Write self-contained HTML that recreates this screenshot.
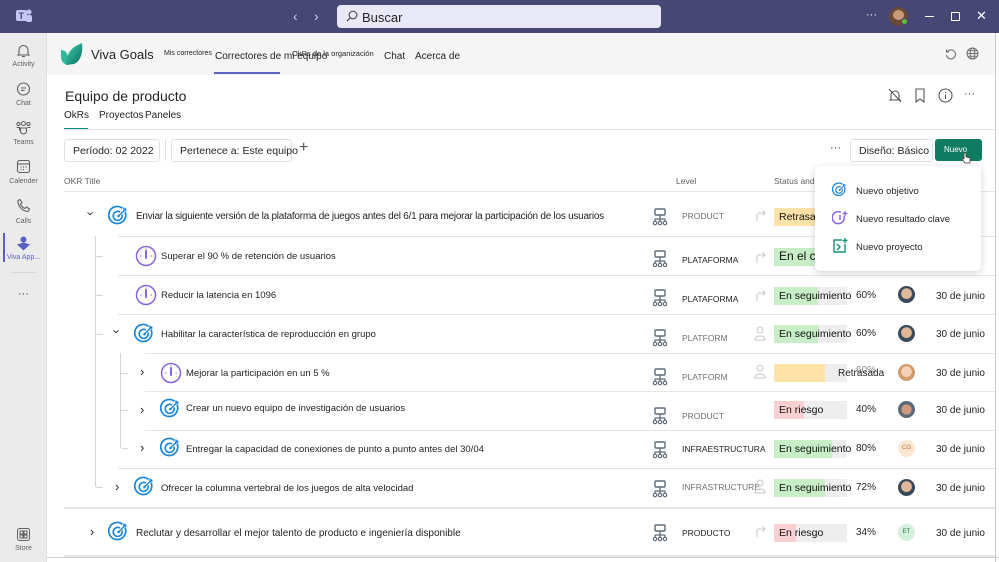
<!DOCTYPE html>
<html><head><meta charset="utf-8">
<style>
*{box-sizing:border-box;margin:0;padding:0}
body{width:999px;height:562px;overflow:hidden;background:#fff;font-family:"Liberation Sans",sans-serif;color:#242424;position:relative}
.a{position:absolute}
.top{left:0;top:0;width:999px;height:33px;background:#464775}
.rail{left:0;top:33px;width:47px;height:529px;background:#ebebeb}
.ri{position:absolute;left:0;width:47px;text-align:center;font-size:7px;color:#616161}
.hdr{left:47px;top:33px;width:948px;height:42px;background:#f5f5f5}
.t{position:absolute;white-space:nowrap;font-size:10px}
.sep{position:absolute;height:1px;background:#e6e6e6}
.bar{position:absolute;left:774px;width:73px;height:18px;background:#eeeeee}
.bar i{position:absolute;left:0;top:0;height:18px}
.bar span{position:absolute;left:5px;top:3px;font-size:10.5px;white-space:nowrap;color:#111}
.av{position:absolute;left:898px;width:17px;height:17px;border-radius:50%}
.btn{position:absolute;border:1px solid #e0e0e0;border-radius:3px;background:#fff;font-size:10.5px;padding:0 8px;height:23px;line-height:23px;white-space:nowrap}
</style></head><body>
<div class="a top"></div>
<svg class="a" style="left:15px;top:8px" width="18" height="16"><rect x="1" y="2" width="11" height="11" rx="2" fill="#c5c7f0"/><text x="3.5" y="11" font-size="9" font-weight="bold" fill="#464775" font-family="Liberation Sans">T</text><circle cx="14" cy="4" r="2.5" fill="#c5c7f0"/><rect x="11" y="7" width="6" height="7" rx="2" fill="#c5c7f0"/></svg>
<div class="t" style="left:293px;top:8px;color:#d0d0ee;font-size:14px">‹</div>
<div class="t" style="left:314px;top:8px;color:#d0d0ee;font-size:14px">›</div>
<div class="a" style="left:337px;top:5px;width:324px;height:23px;background:#e8e8f6;border-radius:4px"></div>
<svg class="a" style="left:346px;top:10px" width="12" height="12"><circle cx="7" cy="5" r="3.8" fill="none" stroke="#555" stroke-width="1.2"/><path d="M4.5 7.5L1 11" stroke="#555" stroke-width="1.3"/></svg>
<div class="t" style="left:362px;top:10px;font-size:13px;color:#242424">Buscar</div>
<div class="t" style="left:866px;top:9px;color:#fff;font-size:11px">···</div>
<div class="a" style="left:889px;top:7px;width:19px;height:19px;border-radius:50%;background:#6b4a36"></div>
<div class="a" style="left:893px;top:10px;width:11px;height:10px;border-radius:50%;background:#c99a7a"></div>
<div class="a" style="left:901px;top:18px;width:7px;height:7px;border-radius:50%;background:#5fc12b;border:1px solid #464775"></div>
<div class="a" style="left:925px;top:16px;width:9px;height:1px;background:#fff"></div>
<div class="a" style="left:951px;top:12px;width:9px;height:9px;border:1px solid #fff"></div>
<div class="t" style="left:976px;top:8px;color:#fff;font-size:13px">✕</div>

<div class="a rail"></div>
<div class="a" style="left:46px;top:33px;width:1px;height:529px;background:#e0e0e0"></div>
<svg class="a" style="left:16px;top:43px" width="15" height="15" fill="none" stroke="#616161" stroke-width="1.1"><path d="M3 11V7a4.5 4.5 0 019 0v4l1 1H2z"/><path d="M6 13.5h3"/></svg>
<div class="ri" style="top:61px">Activity</div>
<svg class="a" style="left:16px;top:82px" width="15" height="15" fill="none" stroke="#616161" stroke-width="1.1"><circle cx="7.5" cy="7" r="6"/><path d="M5 6h5M5 8.5h3.5"/></svg>
<div class="ri" style="top:100px">Chat</div>
<svg class="a" style="left:15px;top:120px" width="17" height="15" fill="none" stroke="#616161" stroke-width="1.1"><circle cx="8.5" cy="3.5" r="2"/><circle cx="3.5" cy="4" r="1.6"/><circle cx="13.5" cy="4" r="1.6"/><path d="M5.5 8h6v3a3 3 0 01-6 0z M1.5 7.5h3v3M15.5 7.5h-3"/></svg>
<div class="ri" style="top:139px">Teams</div>
<svg class="a" style="left:16px;top:159px" width="15" height="15" fill="none" stroke="#616161" stroke-width="1.1"><rect x="1.5" y="1.5" width="12" height="12" rx="2"/><path d="M1.5 5h12"/><path d="M4.5 8h1M7 8h1M9.5 8h1M4.5 10.5h1M7 10.5h1" stroke-width="1.3"/></svg>
<div class="ri" style="top:178px">Calender</div>
<svg class="a" style="left:16px;top:198px" width="15" height="15" fill="none" stroke="#616161" stroke-width="1.1"><path d="M4 1.5l2 3-1.5 1.5c.8 2 2.5 3.8 4.5 4.5L10.5 9l3 2-1.5 2.5C6.5 13.5 1.5 8 2 2.5z"/></svg>
<div class="ri" style="top:218px">Calls</div>
<div class="a" style="left:3px;top:233px;width:2px;height:29px;background:#5b5fc7"></div>
<svg class="a" style="left:16px;top:236px" width="15" height="15"><circle cx="7.5" cy="3.5" r="3" fill="#5b5fc7"/><path d="M1 8.5l6.5-2 6.5 2-6.5 6z" fill="#5b5fc7"/></svg>
<div class="ri" style="top:254px;color:#5b5fc7">Viva App...</div>
<div class="a" style="left:11px;top:272px;width:25px;height:1px;background:#d6d6d6"></div>
<div class="ri" style="top:288px;font-size:11px;color:#424242">···</div>
<svg class="a" style="left:17px;top:528px" width="13" height="13" fill="none" stroke="#616161" stroke-width="1"><rect x=".5" y=".5" width="12" height="12" rx="2"/><rect x="3" y="3" width="3" height="3"/><rect x="7" y="3" width="3" height="3"/><rect x="3" y="7" width="3" height="3"/><rect x="7" y="7" width="3" height="3"/></svg>
<div class="ri" style="top:545px">Store</div>
<div class="a" style="left:47px;top:557px;width:952px;height:1px;background:#d0d0d0"></div>
<div class="a" style="left:995px;top:33px;width:1px;height:529px;background:#c8c8c8"></div>

<div class="a hdr"></div>
<svg class="a" style="left:60px;top:42px" width="24" height="24"><defs><linearGradient id="g" x1="0" y1="0" x2="1" y2="1"><stop offset="0" stop-color="#3fd2a8"/><stop offset="1" stop-color="#0b6a66"/></linearGradient></defs><path d="M1 8c4 0 7 3 7 9v6C3 22 1 19 1 14z" fill="#2fb99a"/><path d="M6 23c0-9 4-16 10-19l6-3c1 9-1 18-8 21z" fill="url(#g)"/></svg>
<div class="t" style="left:91px;top:47px;font-size:13px">Viva Goals</div>
<div class="t" style="left:164px;top:50px;font-size:7px">Mis correctores</div>
<div class="t" style="left:215px;top:51px;font-size:10px">Correctores de mi equipo</div>
<div class="a" style="left:214px;top:72px;width:66px;height:2px;background:#5b5fc7"></div>
<div class="t" style="left:292px;top:49px;font-size:7.5px">OkRs de la organización</div>
<div class="t" style="left:384px;top:51px;font-size:10px">Chat</div>
<div class="t" style="left:415px;top:51px;font-size:10px">Acerca de</div>
<svg class="a" style="left:945px;top:48px" width="12" height="12" fill="none" stroke="#707070" stroke-width="1.1"><path d="M2.5 3.5A4.5 4.5 0 1 1 1.5 7"/><path d="M1.5 1.5v2.5h2.5"/></svg>
<svg class="a" style="left:966px;top:47px" width="13" height="13" fill="none" stroke="#707070" stroke-width="1"><circle cx="6.5" cy="6.5" r="5.5"/><ellipse cx="6.5" cy="6.5" rx="2.3" ry="5.5"/><path d="M1 6.5h11M2 3.8h9M2 9.2h9"/></svg>

<div class="t" style="left:65px;top:88px;font-size:14px">Equipo de producto</div>
<svg class="a" style="left:888px;top:88px" width="14" height="15" fill="none" stroke="#555" stroke-width="1.1"><path d="M3 11V7a4 4 0 018 0v4l1 1H2z"/><path d="M1 1l12 13"/></svg>
<svg class="a" style="left:914px;top:88px" width="12" height="15" fill="none" stroke="#555" stroke-width="1.1"><path d="M2 1h8v13l-4-3-4 3z"/></svg>
<svg class="a" style="left:938px;top:88px" width="15" height="15" fill="none" stroke="#555" stroke-width="1.1"><circle cx="7.5" cy="7.5" r="6.5"/><path d="M7.5 6.5v4.5M7.5 4v1"/></svg>
<div class="t" style="left:964px;top:88px;font-size:11px;color:#424242">···</div>
<div class="t" style="left:64px;top:110px">OkRs</div>
<div class="a" style="left:64px;top:128px;width:24px;height:2px;background:#0f8a72"></div>
<div class="t" style="left:99px;top:110px">Proyectos</div>
<div class="t" style="left:145px;top:110px">Paneles</div>
<div class="sep" style="left:64px;top:129px;width:931px"></div>

<div class="btn" style="left:64px;top:139px;width:96px">Período: 02 2022</div>
<div class="a" style="left:165px;top:139px;width:1px;height:22px;background:#e0e0e0"></div>
<div class="btn" style="left:171px;top:139px;width:121px">Pertenece a: Este equipo</div>
<div class="t" style="left:299px;top:139px;font-size:16px;color:#555">+</div>
<div class="t" style="left:830px;top:142px;font-size:11px">···</div>
<div class="btn" style="left:850px;top:139px;width:83px">Diseño: Básico</div>
<div class="a" style="left:935px;top:139px;width:47px;height:22px;background:#0f7b61;border-radius:3px"></div>
<div class="t" style="left:944px;top:145px;font-size:8px;color:#fff">Nuevo</div>
<svg class="a" style="left:961px;top:152px" width="10" height="12"><path d="M3 1v6L1.5 6 1 7l3 4h5V6L5 5V1z" fill="#fff" stroke="#444" stroke-width=".8"/></svg>

<div class="t" style="left:64px;top:176px;font-size:8.5px;color:#616161">OKR Title</div>
<div class="t" style="left:676px;top:176px;font-size:8.5px;color:#616161">Level</div>
<div class="t" style="left:774px;top:176px;font-size:8.5px;color:#616161">Status and</div>
<div class="sep" style="left:64px;top:191px;width:931px"></div>

<div class="sep" style="left:118px;top:236px;width:877px"></div>
<div class="sep" style="left:118px;top:275px;width:877px"></div>
<div class="sep" style="left:118px;top:314px;width:877px"></div>
<div class="sep" style="left:145px;top:353px;width:850px"></div>
<div class="sep" style="left:145px;top:391px;width:850px"></div>
<div class="sep" style="left:145px;top:430px;width:850px"></div>
<div class="sep" style="left:118px;top:468px;width:877px"></div>
<div class="sep" style="left:64px;top:507px;width:931px;height:2px"></div>
<div class="sep" style="left:64px;top:555px;width:931px;height:2px"></div>
<div class="a" style="left:95px;top:236px;width:8px;height:252px;border-left:1px solid #d6d6d6;border-bottom:1px solid #d6d6d6;border-bottom-left-radius:3px"></div>
<div class="a" style="left:95px;top:256px;width:8px;height:1px;background:#d6d6d6"></div>
<div class="a" style="left:95px;top:295px;width:8px;height:1px;background:#d6d6d6"></div>
<div class="a" style="left:95px;top:334px;width:8px;height:1px;background:#d6d6d6"></div>
<div class="a" style="left:120px;top:353px;width:8px;height:96px;border-left:1px solid #d6d6d6;border-bottom:1px solid #d6d6d6;border-bottom-left-radius:3px"></div>
<div class="a" style="left:120px;top:373px;width:8px;height:1px;background:#d6d6d6"></div>
<div class="a" style="left:120px;top:410px;width:8px;height:1px;background:#d6d6d6"></div>

<svg width="0" height="0" style="position:absolute"><defs>
<symbol id="tg" viewBox="0 0 22 22"><path d="M17 6.5A8.5 8.5 0 1 1 14.5 3.3" fill="none" stroke="#1a86d9" stroke-width="1.7"/><path d="M14 9.5A4.5 4.5 0 1 1 12 7" fill="none" stroke="#1a86d9" stroke-width="1.6"/><circle cx="10.5" cy="11" r="1.3" fill="#1a86d9"/><path d="M10.5 11L18 3.5M16 2.5v2.5h2.5" fill="none" stroke="#1a86d9" stroke-width="1.4"/></symbol>
<symbol id="kr" viewBox="0 0 22 22"><circle cx="11" cy="11" r="9.5" fill="none" stroke="#8764e6" stroke-width="1.5"/><path d="M11 6v7" stroke="#8764e6" stroke-width="2" stroke-linecap="round"/><path d="M5 11h1.5M15.5 11H17M11 3.5v1" stroke="#8764e6" stroke-width="1"/></symbol>
<symbol id="lv" viewBox="0 0 16 18"><rect x="3" y="1" width="10" height="6" rx="1" fill="none" stroke="#5f6b7a" stroke-width="1.4"/><path d="M8 7v4M3 11h10M3 11v2M8 11v2M13 11v2" stroke="#5f6b7a" stroke-width="1.3" fill="none"/><circle cx="3" cy="15" r="1.7" fill="none" stroke="#5f6b7a" stroke-width="1.2"/><circle cx="8" cy="15" r="1.7" fill="none" stroke="#5f6b7a" stroke-width="1.2"/><circle cx="13" cy="15" r="1.7" fill="none" stroke="#5f6b7a" stroke-width="1.2"/></symbol>
<symbol id="ar" viewBox="0 0 12 14"><path d="M2 13V7a2 2 0 012-2h6M7.5 2.5L10 5 7.5 7.5" fill="none" stroke="#c8c8c8" stroke-width="1.1"/></symbol>
<symbol id="pp" viewBox="0 0 12 16"><circle cx="6" cy="4" r="3" fill="none" stroke="#c8c8c8" stroke-width="1"/><path d="M1 14c0-3 2-4 5-4s5 1 5 4z" fill="none" stroke="#c8c8c8" stroke-width="1"/></symbol>
</defs></svg>

<!-- row 1 -->
<div class="t" style="left:89px;top:206px;font-size:13px;transform:rotate(90deg)">›</div>
<svg class="a" style="left:108px;top:205px" width="22" height="22"><use href="#tg"/></svg>
<div class="t" style="left:136px;top:211px;font-size:10px;letter-spacing:-0.25px">Enviar la siguiente versión de la plataforma de juegos antes del 6/1 para mejorar la participación de los usuarios</div>
<svg class="a" style="left:652px;top:208px" width="16" height="18"><use href="#lv"/></svg>
<div class="t" style="left:682px;top:211px;font-size:8.5px;color:#707070">PRODUCT</div>
<svg class="a" style="left:755px;top:208px" width="12" height="14"><use href="#ar"/></svg>
<div class="bar" style="top:208px"><i style="width:40px;background:#fde3a8"></i><span>Retrasada</span></div>
<!-- row 2 -->
<svg class="a" style="left:135px;top:245px" width="22" height="22"><use href="#kr"/></svg>
<div class="t" style="left:161px;top:251px;font-size:9.5px">Superar el 90 % de retención de usuarios</div>
<svg class="a" style="left:652px;top:250px" width="16" height="18"><use href="#lv"/></svg>
<div class="t" style="left:682px;top:255px;font-size:8.5px;color:#222">PLATAFORMA</div>
<svg class="a" style="left:755px;top:250px" width="12" height="14"><use href="#ar"/></svg>
<div class="bar" style="top:248px"><i style="width:40px;background:#c7eec7"></i><span style="font-size:12px;top:1px">En el comercio</span></div>
<!-- row 3 -->
<svg class="a" style="left:135px;top:284px" width="22" height="22"><use href="#kr"/></svg>
<div class="t" style="left:161px;top:290px;font-size:9.5px">Reducir la latencia en 1096</div>
<svg class="a" style="left:652px;top:289px" width="16" height="18"><use href="#lv"/></svg>
<div class="t" style="left:682px;top:294px;font-size:8.5px;color:#222">PLATAFORMA</div>
<svg class="a" style="left:755px;top:288px" width="12" height="14"><use href="#ar"/></svg>
<div class="bar" style="top:287px"><i style="width:44px;background:#c7eec7"></i><span>En seguimiento</span></div>
<div class="t" style="left:856px;top:290px">60%</div>
<div class="av" style="top:286px;background:radial-gradient(circle at 50% 45%,#e0b898 40%,#3a4a5a 45%)"></div>
<div class="t" style="left:936px;top:291px">30 de junio</div>
<!-- row 4 -->
<div class="t" style="left:115px;top:324px;font-size:13px;transform:rotate(90deg)">›</div>
<svg class="a" style="left:134px;top:323px" width="22" height="22"><use href="#tg"/></svg>
<div class="t" style="left:161px;top:329px;font-size:9.5px">Habilitar la característica de reproducción en grupo</div>
<svg class="a" style="left:652px;top:329px" width="16" height="18"><use href="#lv"/></svg>
<div class="t" style="left:682px;top:333px;font-size:8.5px;color:#707070">PLATFORM</div>
<svg class="a" style="left:754px;top:326px" width="12" height="16"><use href="#pp"/></svg>
<div class="bar" style="top:325px"><i style="width:44px;background:#c7eec7"></i><span>En seguimiento</span></div>
<div class="t" style="left:856px;top:328px">60%</div>
<div class="av" style="top:325px;background:radial-gradient(circle at 50% 45%,#e0b898 40%,#3a4a5a 45%)"></div>
<div class="t" style="left:936px;top:329px">30 de junio</div>
<!-- row 5 -->
<div class="t" style="left:140px;top:364px;font-size:13px">›</div>
<svg class="a" style="left:160px;top:362px" width="22" height="22"><use href="#kr"/></svg>
<div class="t" style="left:186px;top:368px;font-size:9.5px">Mejorar la participación en un 5 %</div>
<svg class="a" style="left:652px;top:368px" width="16" height="18"><use href="#lv"/></svg>
<div class="t" style="left:682px;top:372px;font-size:8.5px;color:#707070">PLATFORM</div>
<svg class="a" style="left:754px;top:364px" width="12" height="16"><use href="#pp"/></svg>
<div class="bar" style="top:364px"><i style="width:51px;background:#fde3a8"></i></div>
<div class="t" style="left:856px;top:365px;color:#888">60%</div>
<div class="t" style="left:838px;top:368px">Retrasada</div>
<div class="av" style="top:364px;background:radial-gradient(circle at 50% 45%,#f3d2b8 40%,#d09a6a 45%)"></div>
<div class="t" style="left:936px;top:368px">30 de junio</div>
<!-- row 6 -->
<div class="t" style="left:140px;top:402px;font-size:13px">›</div>
<svg class="a" style="left:160px;top:398px" width="22" height="22"><use href="#tg"/></svg>
<div class="t" style="left:186px;top:403px;font-size:9.5px">Crear un nuevo equipo de investigación de usuarios</div>
<svg class="a" style="left:652px;top:407px" width="16" height="18"><use href="#lv"/></svg>
<div class="t" style="left:682px;top:411px;font-size:8.5px;color:#707070">PRODUCT</div>
<div class="bar" style="top:401px"><i style="width:30px;background:#fbd0d3"></i><span>En riesgo</span></div>
<div class="t" style="left:856px;top:404px">40%</div>
<div class="av" style="top:401px;background:radial-gradient(circle at 50% 50%,#d09a7a 40%,#5a6a7a 45%)"></div>
<div class="t" style="left:936px;top:405px">30 de junio</div>
<!-- row 7 -->
<div class="t" style="left:140px;top:440px;font-size:13px">›</div>
<svg class="a" style="left:160px;top:437px" width="22" height="22"><use href="#tg"/></svg>
<div class="t" style="left:186px;top:444px;font-size:9.5px">Entregar la capacidad de conexiones de punto a punto antes del 30/04</div>
<svg class="a" style="left:652px;top:441px" width="16" height="18"><use href="#lv"/></svg>
<div class="t" style="left:682px;top:444px;font-size:8.5px;color:#222">INFRAESTRUCTURA</div>
<div class="bar" style="top:440px"><i style="width:58px;background:#c7eec7"></i><span>En seguimiento</span></div>
<div class="t" style="left:856px;top:443px">80%</div>
<div class="av" style="top:440px;background:#fde7d2;font-size:6px;color:#b86b3a;text-align:center;line-height:17px">CG</div>
<div class="t" style="left:936px;top:444px">30 de junio</div>
<!-- row 8 -->
<div class="t" style="left:115px;top:479px;font-size:13px">›</div>
<svg class="a" style="left:134px;top:476px" width="22" height="22"><use href="#tg"/></svg>
<div class="t" style="left:161px;top:483px;font-size:9.5px">Ofrecer la columna vertebral de los juegos de alta velocidad</div>
<svg class="a" style="left:652px;top:480px" width="16" height="18"><use href="#lv"/></svg>
<div class="t" style="left:682px;top:482px;font-size:8.5px;color:#707070">INFRASTRUCTURE</div>
<svg class="a" style="left:754px;top:479px" width="12" height="16"><use href="#pp"/></svg>
<div class="bar" style="top:479px"><i style="width:51px;background:#c7eec7"></i><span>En seguimiento</span></div>
<div class="t" style="left:856px;top:482px">72%</div>
<div class="av" style="top:479px;background:radial-gradient(circle at 50% 45%,#e0b898 40%,#3a4a5a 45%)"></div>
<div class="t" style="left:936px;top:483px">30 de junio</div>
<!-- row 9 -->
<div class="t" style="left:90px;top:524px;font-size:13px">›</div>
<svg class="a" style="left:108px;top:521px" width="22" height="22"><use href="#tg"/></svg>
<div class="t" style="left:136px;top:528px;font-size:10px">Reclutar y desarrollar el mejor talento de producto e ingeniería disponible</div>
<svg class="a" style="left:652px;top:524px" width="16" height="18"><use href="#lv"/></svg>
<div class="t" style="left:682px;top:528px;font-size:8.5px;color:#222">PRODUCTO</div>
<svg class="a" style="left:755px;top:524px" width="12" height="14"><use href="#ar"/></svg>
<div class="bar" style="top:524px"><i style="width:22px;background:#fbd0d3"></i><span>En riesgo</span></div>
<div class="t" style="left:856px;top:527px">34%</div>
<div class="av" style="top:524px;background:#d3f0dc;font-size:6px;color:#2b7a4b;text-align:center;line-height:17px">ET</div>
<div class="t" style="left:936px;top:528px">30 de junio</div>

<div class="a" style="left:815px;top:166px;width:166px;height:105px;background:#fff;border-radius:5px;box-shadow:0 2px 8px rgba(0,0,0,.18)"></div>
<svg class="a" style="left:832px;top:182px" width="16" height="16"><use href="#tg"/></svg>
<div class="t" style="left:856px;top:186px;font-size:9.5px">Nuevo objetivo</div>
<svg class="a" style="left:832px;top:210px" width="16" height="16" fill="none" stroke="#8764e6" stroke-width="1.5"><path d="M12 6A6 6 0 1 1 9 2.3"/><path d="M8 5v5"/><path d="M13 1v5M10.5 3.5h5" stroke-width="1.3"/></svg>
<div class="t" style="left:856px;top:214px;font-size:9.5px">Nuevo resultado clave</div>
<svg class="a" style="left:832px;top:238px" width="16" height="16" fill="none" stroke="#17907a" stroke-width="1.4"><path d="M10 2H2v12h11V6"/><path d="M5 6l3 3-3 3M13 0v5M10.5 2.5h5"/></svg>
<div class="t" style="left:856px;top:242px;font-size:9.5px">Nuevo proyecto</div>
</body></html>
